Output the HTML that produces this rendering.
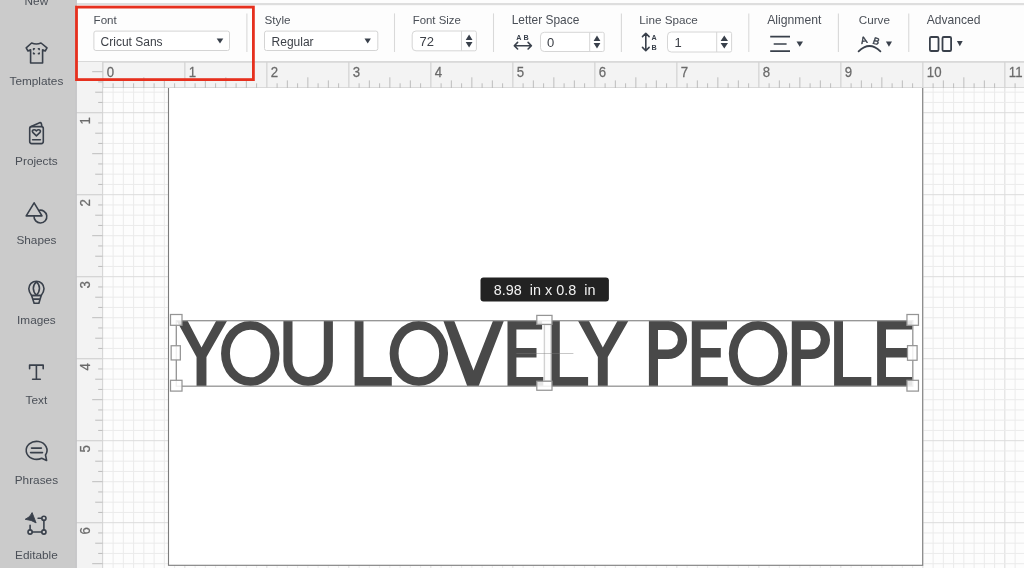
<!DOCTYPE html>
<html><head><meta charset="utf-8"><title>Cricut Design Space</title>
<style>
html,body{margin:0;padding:0;width:1024px;height:568px;overflow:hidden;background:#fff;}
svg{position:absolute;left:0;top:0;display:block;will-change:transform;}
text{font-family:"Liberation Sans",sans-serif;}
.rn{font-size:14.4px;fill:#6a6a6a;stroke:#6a6a6a;stroke-width:0.25px;}
.tl{font-size:11.7px;fill:#4a4f57;}
.tv{font-size:12px;fill:#3d4148;}
.tv2{font-size:13px;fill:#3d4148;}
.sl{font-size:11.8px;fill:#4a4f57;}
.ab{font-size:7.2px;font-weight:bold;fill:#39404b;}
.ab2{font-size:9.6px;fill:#39404b;stroke:#39404b;stroke-width:0.45px;}
</style></head>
<body>
<svg width="1024" height="568" viewBox="0 0 1024 568">
<rect x="103" y="88" width="921" height="480" fill="#fdfdfd"/>
<line x1="113.10" y1="88" x2="113.10" y2="568" stroke="#ebebeb" stroke-width="1"/>
<line x1="123.35" y1="88" x2="123.35" y2="568" stroke="#ebebeb" stroke-width="1"/>
<line x1="133.60" y1="88" x2="133.60" y2="568" stroke="#ebebeb" stroke-width="1"/>
<line x1="143.85" y1="88" x2="143.85" y2="568" stroke="#ebebeb" stroke-width="1"/>
<line x1="154.10" y1="88" x2="154.10" y2="568" stroke="#ebebeb" stroke-width="1"/>
<line x1="164.35" y1="88" x2="164.35" y2="568" stroke="#ebebeb" stroke-width="1"/>
<line x1="174.60" y1="88" x2="174.60" y2="568" stroke="#ebebeb" stroke-width="1"/>
<line x1="184.85" y1="88" x2="184.85" y2="568" stroke="#dcdcdc" stroke-width="1"/>
<line x1="195.10" y1="88" x2="195.10" y2="568" stroke="#ebebeb" stroke-width="1"/>
<line x1="205.35" y1="88" x2="205.35" y2="568" stroke="#ebebeb" stroke-width="1"/>
<line x1="215.60" y1="88" x2="215.60" y2="568" stroke="#ebebeb" stroke-width="1"/>
<line x1="225.85" y1="88" x2="225.85" y2="568" stroke="#ebebeb" stroke-width="1"/>
<line x1="236.10" y1="88" x2="236.10" y2="568" stroke="#ebebeb" stroke-width="1"/>
<line x1="246.35" y1="88" x2="246.35" y2="568" stroke="#ebebeb" stroke-width="1"/>
<line x1="256.60" y1="88" x2="256.60" y2="568" stroke="#ebebeb" stroke-width="1"/>
<line x1="266.85" y1="88" x2="266.85" y2="568" stroke="#dcdcdc" stroke-width="1"/>
<line x1="277.10" y1="88" x2="277.10" y2="568" stroke="#ebebeb" stroke-width="1"/>
<line x1="287.35" y1="88" x2="287.35" y2="568" stroke="#ebebeb" stroke-width="1"/>
<line x1="297.60" y1="88" x2="297.60" y2="568" stroke="#ebebeb" stroke-width="1"/>
<line x1="307.85" y1="88" x2="307.85" y2="568" stroke="#ebebeb" stroke-width="1"/>
<line x1="318.10" y1="88" x2="318.10" y2="568" stroke="#ebebeb" stroke-width="1"/>
<line x1="328.35" y1="88" x2="328.35" y2="568" stroke="#ebebeb" stroke-width="1"/>
<line x1="338.60" y1="88" x2="338.60" y2="568" stroke="#ebebeb" stroke-width="1"/>
<line x1="348.85" y1="88" x2="348.85" y2="568" stroke="#dcdcdc" stroke-width="1"/>
<line x1="359.10" y1="88" x2="359.10" y2="568" stroke="#ebebeb" stroke-width="1"/>
<line x1="369.35" y1="88" x2="369.35" y2="568" stroke="#ebebeb" stroke-width="1"/>
<line x1="379.60" y1="88" x2="379.60" y2="568" stroke="#ebebeb" stroke-width="1"/>
<line x1="389.85" y1="88" x2="389.85" y2="568" stroke="#ebebeb" stroke-width="1"/>
<line x1="400.10" y1="88" x2="400.10" y2="568" stroke="#ebebeb" stroke-width="1"/>
<line x1="410.35" y1="88" x2="410.35" y2="568" stroke="#ebebeb" stroke-width="1"/>
<line x1="420.60" y1="88" x2="420.60" y2="568" stroke="#ebebeb" stroke-width="1"/>
<line x1="430.85" y1="88" x2="430.85" y2="568" stroke="#dcdcdc" stroke-width="1"/>
<line x1="441.10" y1="88" x2="441.10" y2="568" stroke="#ebebeb" stroke-width="1"/>
<line x1="451.35" y1="88" x2="451.35" y2="568" stroke="#ebebeb" stroke-width="1"/>
<line x1="461.60" y1="88" x2="461.60" y2="568" stroke="#ebebeb" stroke-width="1"/>
<line x1="471.85" y1="88" x2="471.85" y2="568" stroke="#ebebeb" stroke-width="1"/>
<line x1="482.10" y1="88" x2="482.10" y2="568" stroke="#ebebeb" stroke-width="1"/>
<line x1="492.35" y1="88" x2="492.35" y2="568" stroke="#ebebeb" stroke-width="1"/>
<line x1="502.60" y1="88" x2="502.60" y2="568" stroke="#ebebeb" stroke-width="1"/>
<line x1="512.85" y1="88" x2="512.85" y2="568" stroke="#dcdcdc" stroke-width="1"/>
<line x1="523.10" y1="88" x2="523.10" y2="568" stroke="#ebebeb" stroke-width="1"/>
<line x1="533.35" y1="88" x2="533.35" y2="568" stroke="#ebebeb" stroke-width="1"/>
<line x1="543.60" y1="88" x2="543.60" y2="568" stroke="#ebebeb" stroke-width="1"/>
<line x1="553.85" y1="88" x2="553.85" y2="568" stroke="#ebebeb" stroke-width="1"/>
<line x1="564.10" y1="88" x2="564.10" y2="568" stroke="#ebebeb" stroke-width="1"/>
<line x1="574.35" y1="88" x2="574.35" y2="568" stroke="#ebebeb" stroke-width="1"/>
<line x1="584.60" y1="88" x2="584.60" y2="568" stroke="#ebebeb" stroke-width="1"/>
<line x1="594.85" y1="88" x2="594.85" y2="568" stroke="#dcdcdc" stroke-width="1"/>
<line x1="605.10" y1="88" x2="605.10" y2="568" stroke="#ebebeb" stroke-width="1"/>
<line x1="615.35" y1="88" x2="615.35" y2="568" stroke="#ebebeb" stroke-width="1"/>
<line x1="625.60" y1="88" x2="625.60" y2="568" stroke="#ebebeb" stroke-width="1"/>
<line x1="635.85" y1="88" x2="635.85" y2="568" stroke="#ebebeb" stroke-width="1"/>
<line x1="646.10" y1="88" x2="646.10" y2="568" stroke="#ebebeb" stroke-width="1"/>
<line x1="656.35" y1="88" x2="656.35" y2="568" stroke="#ebebeb" stroke-width="1"/>
<line x1="666.60" y1="88" x2="666.60" y2="568" stroke="#ebebeb" stroke-width="1"/>
<line x1="676.85" y1="88" x2="676.85" y2="568" stroke="#dcdcdc" stroke-width="1"/>
<line x1="687.10" y1="88" x2="687.10" y2="568" stroke="#ebebeb" stroke-width="1"/>
<line x1="697.35" y1="88" x2="697.35" y2="568" stroke="#ebebeb" stroke-width="1"/>
<line x1="707.60" y1="88" x2="707.60" y2="568" stroke="#ebebeb" stroke-width="1"/>
<line x1="717.85" y1="88" x2="717.85" y2="568" stroke="#ebebeb" stroke-width="1"/>
<line x1="728.10" y1="88" x2="728.10" y2="568" stroke="#ebebeb" stroke-width="1"/>
<line x1="738.35" y1="88" x2="738.35" y2="568" stroke="#ebebeb" stroke-width="1"/>
<line x1="748.60" y1="88" x2="748.60" y2="568" stroke="#ebebeb" stroke-width="1"/>
<line x1="758.85" y1="88" x2="758.85" y2="568" stroke="#dcdcdc" stroke-width="1"/>
<line x1="769.10" y1="88" x2="769.10" y2="568" stroke="#ebebeb" stroke-width="1"/>
<line x1="779.35" y1="88" x2="779.35" y2="568" stroke="#ebebeb" stroke-width="1"/>
<line x1="789.60" y1="88" x2="789.60" y2="568" stroke="#ebebeb" stroke-width="1"/>
<line x1="799.85" y1="88" x2="799.85" y2="568" stroke="#ebebeb" stroke-width="1"/>
<line x1="810.10" y1="88" x2="810.10" y2="568" stroke="#ebebeb" stroke-width="1"/>
<line x1="820.35" y1="88" x2="820.35" y2="568" stroke="#ebebeb" stroke-width="1"/>
<line x1="830.60" y1="88" x2="830.60" y2="568" stroke="#ebebeb" stroke-width="1"/>
<line x1="840.85" y1="88" x2="840.85" y2="568" stroke="#dcdcdc" stroke-width="1"/>
<line x1="851.10" y1="88" x2="851.10" y2="568" stroke="#ebebeb" stroke-width="1"/>
<line x1="861.35" y1="88" x2="861.35" y2="568" stroke="#ebebeb" stroke-width="1"/>
<line x1="871.60" y1="88" x2="871.60" y2="568" stroke="#ebebeb" stroke-width="1"/>
<line x1="881.85" y1="88" x2="881.85" y2="568" stroke="#ebebeb" stroke-width="1"/>
<line x1="892.10" y1="88" x2="892.10" y2="568" stroke="#ebebeb" stroke-width="1"/>
<line x1="902.35" y1="88" x2="902.35" y2="568" stroke="#ebebeb" stroke-width="1"/>
<line x1="912.60" y1="88" x2="912.60" y2="568" stroke="#ebebeb" stroke-width="1"/>
<line x1="922.85" y1="88" x2="922.85" y2="568" stroke="#dcdcdc" stroke-width="1"/>
<line x1="933.10" y1="88" x2="933.10" y2="568" stroke="#ebebeb" stroke-width="1"/>
<line x1="943.35" y1="88" x2="943.35" y2="568" stroke="#ebebeb" stroke-width="1"/>
<line x1="953.60" y1="88" x2="953.60" y2="568" stroke="#ebebeb" stroke-width="1"/>
<line x1="963.85" y1="88" x2="963.85" y2="568" stroke="#ebebeb" stroke-width="1"/>
<line x1="974.10" y1="88" x2="974.10" y2="568" stroke="#ebebeb" stroke-width="1"/>
<line x1="984.35" y1="88" x2="984.35" y2="568" stroke="#ebebeb" stroke-width="1"/>
<line x1="994.60" y1="88" x2="994.60" y2="568" stroke="#ebebeb" stroke-width="1"/>
<line x1="1004.85" y1="88" x2="1004.85" y2="568" stroke="#dcdcdc" stroke-width="1"/>
<line x1="1015.10" y1="88" x2="1015.10" y2="568" stroke="#ebebeb" stroke-width="1"/>
<line x1="103" y1="92.20" x2="1024" y2="92.20" stroke="#ebebeb" stroke-width="1"/>
<line x1="103" y1="102.45" x2="1024" y2="102.45" stroke="#ebebeb" stroke-width="1"/>
<line x1="103" y1="112.70" x2="1024" y2="112.70" stroke="#dcdcdc" stroke-width="1"/>
<line x1="103" y1="122.95" x2="1024" y2="122.95" stroke="#ebebeb" stroke-width="1"/>
<line x1="103" y1="133.20" x2="1024" y2="133.20" stroke="#ebebeb" stroke-width="1"/>
<line x1="103" y1="143.45" x2="1024" y2="143.45" stroke="#ebebeb" stroke-width="1"/>
<line x1="103" y1="153.70" x2="1024" y2="153.70" stroke="#ebebeb" stroke-width="1"/>
<line x1="103" y1="163.95" x2="1024" y2="163.95" stroke="#ebebeb" stroke-width="1"/>
<line x1="103" y1="174.20" x2="1024" y2="174.20" stroke="#ebebeb" stroke-width="1"/>
<line x1="103" y1="184.45" x2="1024" y2="184.45" stroke="#ebebeb" stroke-width="1"/>
<line x1="103" y1="194.70" x2="1024" y2="194.70" stroke="#dcdcdc" stroke-width="1"/>
<line x1="103" y1="204.95" x2="1024" y2="204.95" stroke="#ebebeb" stroke-width="1"/>
<line x1="103" y1="215.20" x2="1024" y2="215.20" stroke="#ebebeb" stroke-width="1"/>
<line x1="103" y1="225.45" x2="1024" y2="225.45" stroke="#ebebeb" stroke-width="1"/>
<line x1="103" y1="235.70" x2="1024" y2="235.70" stroke="#ebebeb" stroke-width="1"/>
<line x1="103" y1="245.95" x2="1024" y2="245.95" stroke="#ebebeb" stroke-width="1"/>
<line x1="103" y1="256.20" x2="1024" y2="256.20" stroke="#ebebeb" stroke-width="1"/>
<line x1="103" y1="266.45" x2="1024" y2="266.45" stroke="#ebebeb" stroke-width="1"/>
<line x1="103" y1="276.70" x2="1024" y2="276.70" stroke="#dcdcdc" stroke-width="1"/>
<line x1="103" y1="286.95" x2="1024" y2="286.95" stroke="#ebebeb" stroke-width="1"/>
<line x1="103" y1="297.20" x2="1024" y2="297.20" stroke="#ebebeb" stroke-width="1"/>
<line x1="103" y1="307.45" x2="1024" y2="307.45" stroke="#ebebeb" stroke-width="1"/>
<line x1="103" y1="317.70" x2="1024" y2="317.70" stroke="#ebebeb" stroke-width="1"/>
<line x1="103" y1="327.95" x2="1024" y2="327.95" stroke="#ebebeb" stroke-width="1"/>
<line x1="103" y1="338.20" x2="1024" y2="338.20" stroke="#ebebeb" stroke-width="1"/>
<line x1="103" y1="348.45" x2="1024" y2="348.45" stroke="#ebebeb" stroke-width="1"/>
<line x1="103" y1="358.70" x2="1024" y2="358.70" stroke="#dcdcdc" stroke-width="1"/>
<line x1="103" y1="368.95" x2="1024" y2="368.95" stroke="#ebebeb" stroke-width="1"/>
<line x1="103" y1="379.20" x2="1024" y2="379.20" stroke="#ebebeb" stroke-width="1"/>
<line x1="103" y1="389.45" x2="1024" y2="389.45" stroke="#ebebeb" stroke-width="1"/>
<line x1="103" y1="399.70" x2="1024" y2="399.70" stroke="#ebebeb" stroke-width="1"/>
<line x1="103" y1="409.95" x2="1024" y2="409.95" stroke="#ebebeb" stroke-width="1"/>
<line x1="103" y1="420.20" x2="1024" y2="420.20" stroke="#ebebeb" stroke-width="1"/>
<line x1="103" y1="430.45" x2="1024" y2="430.45" stroke="#ebebeb" stroke-width="1"/>
<line x1="103" y1="440.70" x2="1024" y2="440.70" stroke="#dcdcdc" stroke-width="1"/>
<line x1="103" y1="450.95" x2="1024" y2="450.95" stroke="#ebebeb" stroke-width="1"/>
<line x1="103" y1="461.20" x2="1024" y2="461.20" stroke="#ebebeb" stroke-width="1"/>
<line x1="103" y1="471.45" x2="1024" y2="471.45" stroke="#ebebeb" stroke-width="1"/>
<line x1="103" y1="481.70" x2="1024" y2="481.70" stroke="#ebebeb" stroke-width="1"/>
<line x1="103" y1="491.95" x2="1024" y2="491.95" stroke="#ebebeb" stroke-width="1"/>
<line x1="103" y1="502.20" x2="1024" y2="502.20" stroke="#ebebeb" stroke-width="1"/>
<line x1="103" y1="512.45" x2="1024" y2="512.45" stroke="#ebebeb" stroke-width="1"/>
<line x1="103" y1="522.70" x2="1024" y2="522.70" stroke="#dcdcdc" stroke-width="1"/>
<line x1="103" y1="532.95" x2="1024" y2="532.95" stroke="#ebebeb" stroke-width="1"/>
<line x1="103" y1="543.20" x2="1024" y2="543.20" stroke="#ebebeb" stroke-width="1"/>
<line x1="103" y1="553.45" x2="1024" y2="553.45" stroke="#ebebeb" stroke-width="1"/>
<line x1="103" y1="563.70" x2="1024" y2="563.70" stroke="#ebebeb" stroke-width="1"/>
<rect x="168.5" y="80" width="754.2" height="485.3" fill="#ffffff" stroke="#7c7c7c" stroke-width="1.1"/>
<rect x="76" y="61" width="948" height="27" fill="#f3f3f3"/>
<rect x="76" y="61" width="948" height="1.8" fill="#d9d9d9"/>
<line x1="103" y1="87.5" x2="1024" y2="87.5" stroke="#d9d9d9" stroke-width="1"/>
<line x1="102.85" y1="62" x2="102.85" y2="88" stroke="#d2d2d2" stroke-width="1.2"/>
<text x="0" y="0" class="rn" transform="translate(106.85,76.7) scale(0.92,1)">0</text>
<line x1="113.10" y1="83.3" x2="113.10" y2="88" stroke="#bdbdbd" stroke-width="1"/>
<line x1="123.35" y1="80.4" x2="123.35" y2="88" stroke="#bdbdbd" stroke-width="1"/>
<line x1="133.60" y1="83.3" x2="133.60" y2="88" stroke="#bdbdbd" stroke-width="1"/>
<line x1="143.85" y1="77.3" x2="143.85" y2="88" stroke="#bdbdbd" stroke-width="1"/>
<line x1="154.10" y1="83.3" x2="154.10" y2="88" stroke="#bdbdbd" stroke-width="1"/>
<line x1="164.35" y1="80.4" x2="164.35" y2="88" stroke="#bdbdbd" stroke-width="1"/>
<line x1="174.60" y1="83.3" x2="174.60" y2="88" stroke="#bdbdbd" stroke-width="1"/>
<line x1="184.85" y1="62" x2="184.85" y2="88" stroke="#d2d2d2" stroke-width="1.2"/>
<text x="0" y="0" class="rn" transform="translate(188.85,76.7) scale(0.92,1)">1</text>
<line x1="195.10" y1="83.3" x2="195.10" y2="88" stroke="#bdbdbd" stroke-width="1"/>
<line x1="205.35" y1="80.4" x2="205.35" y2="88" stroke="#bdbdbd" stroke-width="1"/>
<line x1="215.60" y1="83.3" x2="215.60" y2="88" stroke="#bdbdbd" stroke-width="1"/>
<line x1="225.85" y1="77.3" x2="225.85" y2="88" stroke="#bdbdbd" stroke-width="1"/>
<line x1="236.10" y1="83.3" x2="236.10" y2="88" stroke="#bdbdbd" stroke-width="1"/>
<line x1="246.35" y1="80.4" x2="246.35" y2="88" stroke="#bdbdbd" stroke-width="1"/>
<line x1="256.60" y1="83.3" x2="256.60" y2="88" stroke="#bdbdbd" stroke-width="1"/>
<line x1="266.85" y1="62" x2="266.85" y2="88" stroke="#d2d2d2" stroke-width="1.2"/>
<text x="0" y="0" class="rn" transform="translate(270.85,76.7) scale(0.92,1)">2</text>
<line x1="277.10" y1="83.3" x2="277.10" y2="88" stroke="#bdbdbd" stroke-width="1"/>
<line x1="287.35" y1="80.4" x2="287.35" y2="88" stroke="#bdbdbd" stroke-width="1"/>
<line x1="297.60" y1="83.3" x2="297.60" y2="88" stroke="#bdbdbd" stroke-width="1"/>
<line x1="307.85" y1="77.3" x2="307.85" y2="88" stroke="#bdbdbd" stroke-width="1"/>
<line x1="318.10" y1="83.3" x2="318.10" y2="88" stroke="#bdbdbd" stroke-width="1"/>
<line x1="328.35" y1="80.4" x2="328.35" y2="88" stroke="#bdbdbd" stroke-width="1"/>
<line x1="338.60" y1="83.3" x2="338.60" y2="88" stroke="#bdbdbd" stroke-width="1"/>
<line x1="348.85" y1="62" x2="348.85" y2="88" stroke="#d2d2d2" stroke-width="1.2"/>
<text x="0" y="0" class="rn" transform="translate(352.85,76.7) scale(0.92,1)">3</text>
<line x1="359.10" y1="83.3" x2="359.10" y2="88" stroke="#bdbdbd" stroke-width="1"/>
<line x1="369.35" y1="80.4" x2="369.35" y2="88" stroke="#bdbdbd" stroke-width="1"/>
<line x1="379.60" y1="83.3" x2="379.60" y2="88" stroke="#bdbdbd" stroke-width="1"/>
<line x1="389.85" y1="77.3" x2="389.85" y2="88" stroke="#bdbdbd" stroke-width="1"/>
<line x1="400.10" y1="83.3" x2="400.10" y2="88" stroke="#bdbdbd" stroke-width="1"/>
<line x1="410.35" y1="80.4" x2="410.35" y2="88" stroke="#bdbdbd" stroke-width="1"/>
<line x1="420.60" y1="83.3" x2="420.60" y2="88" stroke="#bdbdbd" stroke-width="1"/>
<line x1="430.85" y1="62" x2="430.85" y2="88" stroke="#d2d2d2" stroke-width="1.2"/>
<text x="0" y="0" class="rn" transform="translate(434.85,76.7) scale(0.92,1)">4</text>
<line x1="441.10" y1="83.3" x2="441.10" y2="88" stroke="#bdbdbd" stroke-width="1"/>
<line x1="451.35" y1="80.4" x2="451.35" y2="88" stroke="#bdbdbd" stroke-width="1"/>
<line x1="461.60" y1="83.3" x2="461.60" y2="88" stroke="#bdbdbd" stroke-width="1"/>
<line x1="471.85" y1="77.3" x2="471.85" y2="88" stroke="#bdbdbd" stroke-width="1"/>
<line x1="482.10" y1="83.3" x2="482.10" y2="88" stroke="#bdbdbd" stroke-width="1"/>
<line x1="492.35" y1="80.4" x2="492.35" y2="88" stroke="#bdbdbd" stroke-width="1"/>
<line x1="502.60" y1="83.3" x2="502.60" y2="88" stroke="#bdbdbd" stroke-width="1"/>
<line x1="512.85" y1="62" x2="512.85" y2="88" stroke="#d2d2d2" stroke-width="1.2"/>
<text x="0" y="0" class="rn" transform="translate(516.85,76.7) scale(0.92,1)">5</text>
<line x1="523.10" y1="83.3" x2="523.10" y2="88" stroke="#bdbdbd" stroke-width="1"/>
<line x1="533.35" y1="80.4" x2="533.35" y2="88" stroke="#bdbdbd" stroke-width="1"/>
<line x1="543.60" y1="83.3" x2="543.60" y2="88" stroke="#bdbdbd" stroke-width="1"/>
<line x1="553.85" y1="77.3" x2="553.85" y2="88" stroke="#bdbdbd" stroke-width="1"/>
<line x1="564.10" y1="83.3" x2="564.10" y2="88" stroke="#bdbdbd" stroke-width="1"/>
<line x1="574.35" y1="80.4" x2="574.35" y2="88" stroke="#bdbdbd" stroke-width="1"/>
<line x1="584.60" y1="83.3" x2="584.60" y2="88" stroke="#bdbdbd" stroke-width="1"/>
<line x1="594.85" y1="62" x2="594.85" y2="88" stroke="#d2d2d2" stroke-width="1.2"/>
<text x="0" y="0" class="rn" transform="translate(598.85,76.7) scale(0.92,1)">6</text>
<line x1="605.10" y1="83.3" x2="605.10" y2="88" stroke="#bdbdbd" stroke-width="1"/>
<line x1="615.35" y1="80.4" x2="615.35" y2="88" stroke="#bdbdbd" stroke-width="1"/>
<line x1="625.60" y1="83.3" x2="625.60" y2="88" stroke="#bdbdbd" stroke-width="1"/>
<line x1="635.85" y1="77.3" x2="635.85" y2="88" stroke="#bdbdbd" stroke-width="1"/>
<line x1="646.10" y1="83.3" x2="646.10" y2="88" stroke="#bdbdbd" stroke-width="1"/>
<line x1="656.35" y1="80.4" x2="656.35" y2="88" stroke="#bdbdbd" stroke-width="1"/>
<line x1="666.60" y1="83.3" x2="666.60" y2="88" stroke="#bdbdbd" stroke-width="1"/>
<line x1="676.85" y1="62" x2="676.85" y2="88" stroke="#d2d2d2" stroke-width="1.2"/>
<text x="0" y="0" class="rn" transform="translate(680.85,76.7) scale(0.92,1)">7</text>
<line x1="687.10" y1="83.3" x2="687.10" y2="88" stroke="#bdbdbd" stroke-width="1"/>
<line x1="697.35" y1="80.4" x2="697.35" y2="88" stroke="#bdbdbd" stroke-width="1"/>
<line x1="707.60" y1="83.3" x2="707.60" y2="88" stroke="#bdbdbd" stroke-width="1"/>
<line x1="717.85" y1="77.3" x2="717.85" y2="88" stroke="#bdbdbd" stroke-width="1"/>
<line x1="728.10" y1="83.3" x2="728.10" y2="88" stroke="#bdbdbd" stroke-width="1"/>
<line x1="738.35" y1="80.4" x2="738.35" y2="88" stroke="#bdbdbd" stroke-width="1"/>
<line x1="748.60" y1="83.3" x2="748.60" y2="88" stroke="#bdbdbd" stroke-width="1"/>
<line x1="758.85" y1="62" x2="758.85" y2="88" stroke="#d2d2d2" stroke-width="1.2"/>
<text x="0" y="0" class="rn" transform="translate(762.85,76.7) scale(0.92,1)">8</text>
<line x1="769.10" y1="83.3" x2="769.10" y2="88" stroke="#bdbdbd" stroke-width="1"/>
<line x1="779.35" y1="80.4" x2="779.35" y2="88" stroke="#bdbdbd" stroke-width="1"/>
<line x1="789.60" y1="83.3" x2="789.60" y2="88" stroke="#bdbdbd" stroke-width="1"/>
<line x1="799.85" y1="77.3" x2="799.85" y2="88" stroke="#bdbdbd" stroke-width="1"/>
<line x1="810.10" y1="83.3" x2="810.10" y2="88" stroke="#bdbdbd" stroke-width="1"/>
<line x1="820.35" y1="80.4" x2="820.35" y2="88" stroke="#bdbdbd" stroke-width="1"/>
<line x1="830.60" y1="83.3" x2="830.60" y2="88" stroke="#bdbdbd" stroke-width="1"/>
<line x1="840.85" y1="62" x2="840.85" y2="88" stroke="#d2d2d2" stroke-width="1.2"/>
<text x="0" y="0" class="rn" transform="translate(844.85,76.7) scale(0.92,1)">9</text>
<line x1="851.10" y1="83.3" x2="851.10" y2="88" stroke="#bdbdbd" stroke-width="1"/>
<line x1="861.35" y1="80.4" x2="861.35" y2="88" stroke="#bdbdbd" stroke-width="1"/>
<line x1="871.60" y1="83.3" x2="871.60" y2="88" stroke="#bdbdbd" stroke-width="1"/>
<line x1="881.85" y1="77.3" x2="881.85" y2="88" stroke="#bdbdbd" stroke-width="1"/>
<line x1="892.10" y1="83.3" x2="892.10" y2="88" stroke="#bdbdbd" stroke-width="1"/>
<line x1="902.35" y1="80.4" x2="902.35" y2="88" stroke="#bdbdbd" stroke-width="1"/>
<line x1="912.60" y1="83.3" x2="912.60" y2="88" stroke="#bdbdbd" stroke-width="1"/>
<line x1="922.85" y1="62" x2="922.85" y2="88" stroke="#d2d2d2" stroke-width="1.2"/>
<text x="0" y="0" class="rn" transform="translate(926.85,76.7) scale(0.92,1)">10</text>
<line x1="933.10" y1="83.3" x2="933.10" y2="88" stroke="#bdbdbd" stroke-width="1"/>
<line x1="943.35" y1="80.4" x2="943.35" y2="88" stroke="#bdbdbd" stroke-width="1"/>
<line x1="953.60" y1="83.3" x2="953.60" y2="88" stroke="#bdbdbd" stroke-width="1"/>
<line x1="963.85" y1="77.3" x2="963.85" y2="88" stroke="#bdbdbd" stroke-width="1"/>
<line x1="974.10" y1="83.3" x2="974.10" y2="88" stroke="#bdbdbd" stroke-width="1"/>
<line x1="984.35" y1="80.4" x2="984.35" y2="88" stroke="#bdbdbd" stroke-width="1"/>
<line x1="994.60" y1="83.3" x2="994.60" y2="88" stroke="#bdbdbd" stroke-width="1"/>
<line x1="1004.85" y1="62" x2="1004.85" y2="88" stroke="#d2d2d2" stroke-width="1.2"/>
<text x="0" y="0" class="rn" transform="translate(1008.85,76.7) scale(0.92,1)">11</text>
<line x1="1015.10" y1="83.3" x2="1015.10" y2="88" stroke="#bdbdbd" stroke-width="1"/>
<rect x="76" y="62" width="26.6" height="506" fill="#f3f3f3"/>
<line x1="102.6" y1="62" x2="102.6" y2="568" stroke="#d6d6d6" stroke-width="1.1"/>
<line x1="92.2" y1="71.70" x2="102.6" y2="71.70" stroke="#bdbdbd" stroke-width="1"/>
<line x1="98.2" y1="81.95" x2="102.6" y2="81.95" stroke="#bdbdbd" stroke-width="1"/>
<line x1="95.2" y1="92.20" x2="102.6" y2="92.20" stroke="#bdbdbd" stroke-width="1"/>
<line x1="98.2" y1="102.45" x2="102.6" y2="102.45" stroke="#bdbdbd" stroke-width="1"/>
<line x1="76" y1="112.70" x2="102.6" y2="112.70" stroke="#d2d2d2" stroke-width="1.2"/>
<text x="0" y="0" class="rn" text-anchor="middle" transform="translate(90.3,120.80) rotate(-90) scale(0.92,1)">1</text>
<line x1="98.2" y1="122.95" x2="102.6" y2="122.95" stroke="#bdbdbd" stroke-width="1"/>
<line x1="95.2" y1="133.20" x2="102.6" y2="133.20" stroke="#bdbdbd" stroke-width="1"/>
<line x1="98.2" y1="143.45" x2="102.6" y2="143.45" stroke="#bdbdbd" stroke-width="1"/>
<line x1="92.2" y1="153.70" x2="102.6" y2="153.70" stroke="#bdbdbd" stroke-width="1"/>
<line x1="98.2" y1="163.95" x2="102.6" y2="163.95" stroke="#bdbdbd" stroke-width="1"/>
<line x1="95.2" y1="174.20" x2="102.6" y2="174.20" stroke="#bdbdbd" stroke-width="1"/>
<line x1="98.2" y1="184.45" x2="102.6" y2="184.45" stroke="#bdbdbd" stroke-width="1"/>
<line x1="76" y1="194.70" x2="102.6" y2="194.70" stroke="#d2d2d2" stroke-width="1.2"/>
<text x="0" y="0" class="rn" text-anchor="middle" transform="translate(90.3,202.80) rotate(-90) scale(0.92,1)">2</text>
<line x1="98.2" y1="204.95" x2="102.6" y2="204.95" stroke="#bdbdbd" stroke-width="1"/>
<line x1="95.2" y1="215.20" x2="102.6" y2="215.20" stroke="#bdbdbd" stroke-width="1"/>
<line x1="98.2" y1="225.45" x2="102.6" y2="225.45" stroke="#bdbdbd" stroke-width="1"/>
<line x1="92.2" y1="235.70" x2="102.6" y2="235.70" stroke="#bdbdbd" stroke-width="1"/>
<line x1="98.2" y1="245.95" x2="102.6" y2="245.95" stroke="#bdbdbd" stroke-width="1"/>
<line x1="95.2" y1="256.20" x2="102.6" y2="256.20" stroke="#bdbdbd" stroke-width="1"/>
<line x1="98.2" y1="266.45" x2="102.6" y2="266.45" stroke="#bdbdbd" stroke-width="1"/>
<line x1="76" y1="276.70" x2="102.6" y2="276.70" stroke="#d2d2d2" stroke-width="1.2"/>
<text x="0" y="0" class="rn" text-anchor="middle" transform="translate(90.3,284.80) rotate(-90) scale(0.92,1)">3</text>
<line x1="98.2" y1="286.95" x2="102.6" y2="286.95" stroke="#bdbdbd" stroke-width="1"/>
<line x1="95.2" y1="297.20" x2="102.6" y2="297.20" stroke="#bdbdbd" stroke-width="1"/>
<line x1="98.2" y1="307.45" x2="102.6" y2="307.45" stroke="#bdbdbd" stroke-width="1"/>
<line x1="92.2" y1="317.70" x2="102.6" y2="317.70" stroke="#bdbdbd" stroke-width="1"/>
<line x1="98.2" y1="327.95" x2="102.6" y2="327.95" stroke="#bdbdbd" stroke-width="1"/>
<line x1="95.2" y1="338.20" x2="102.6" y2="338.20" stroke="#bdbdbd" stroke-width="1"/>
<line x1="98.2" y1="348.45" x2="102.6" y2="348.45" stroke="#bdbdbd" stroke-width="1"/>
<line x1="76" y1="358.70" x2="102.6" y2="358.70" stroke="#d2d2d2" stroke-width="1.2"/>
<text x="0" y="0" class="rn" text-anchor="middle" transform="translate(90.3,366.80) rotate(-90) scale(0.92,1)">4</text>
<line x1="98.2" y1="368.95" x2="102.6" y2="368.95" stroke="#bdbdbd" stroke-width="1"/>
<line x1="95.2" y1="379.20" x2="102.6" y2="379.20" stroke="#bdbdbd" stroke-width="1"/>
<line x1="98.2" y1="389.45" x2="102.6" y2="389.45" stroke="#bdbdbd" stroke-width="1"/>
<line x1="92.2" y1="399.70" x2="102.6" y2="399.70" stroke="#bdbdbd" stroke-width="1"/>
<line x1="98.2" y1="409.95" x2="102.6" y2="409.95" stroke="#bdbdbd" stroke-width="1"/>
<line x1="95.2" y1="420.20" x2="102.6" y2="420.20" stroke="#bdbdbd" stroke-width="1"/>
<line x1="98.2" y1="430.45" x2="102.6" y2="430.45" stroke="#bdbdbd" stroke-width="1"/>
<line x1="76" y1="440.70" x2="102.6" y2="440.70" stroke="#d2d2d2" stroke-width="1.2"/>
<text x="0" y="0" class="rn" text-anchor="middle" transform="translate(90.3,448.80) rotate(-90) scale(0.92,1)">5</text>
<line x1="98.2" y1="450.95" x2="102.6" y2="450.95" stroke="#bdbdbd" stroke-width="1"/>
<line x1="95.2" y1="461.20" x2="102.6" y2="461.20" stroke="#bdbdbd" stroke-width="1"/>
<line x1="98.2" y1="471.45" x2="102.6" y2="471.45" stroke="#bdbdbd" stroke-width="1"/>
<line x1="92.2" y1="481.70" x2="102.6" y2="481.70" stroke="#bdbdbd" stroke-width="1"/>
<line x1="98.2" y1="491.95" x2="102.6" y2="491.95" stroke="#bdbdbd" stroke-width="1"/>
<line x1="95.2" y1="502.20" x2="102.6" y2="502.20" stroke="#bdbdbd" stroke-width="1"/>
<line x1="98.2" y1="512.45" x2="102.6" y2="512.45" stroke="#bdbdbd" stroke-width="1"/>
<line x1="76" y1="522.70" x2="102.6" y2="522.70" stroke="#d2d2d2" stroke-width="1.2"/>
<text x="0" y="0" class="rn" text-anchor="middle" transform="translate(90.3,530.80) rotate(-90) scale(0.92,1)">6</text>
<line x1="98.2" y1="532.95" x2="102.6" y2="532.95" stroke="#bdbdbd" stroke-width="1"/>
<line x1="95.2" y1="543.20" x2="102.6" y2="543.20" stroke="#bdbdbd" stroke-width="1"/>
<line x1="98.2" y1="553.45" x2="102.6" y2="553.45" stroke="#bdbdbd" stroke-width="1"/>
<line x1="92.2" y1="563.70" x2="102.6" y2="563.70" stroke="#bdbdbd" stroke-width="1"/>
<path d="M176.80,321.0 H187.70 L201.50,347.6 L216.10,321.0 H227.00 L206.45,357.00 V386.0 H196.55 V357.00 Z M221.05,353.5 A29.2,32.5 0 1 0 279.45,353.5 A29.2,32.5 0 1 0 221.05,353.5 Z M229.95,353.5 A20.3,23.85 0 1 1 270.55,353.5 A20.3,23.85 0 1 1 229.95,353.5 Z M283.40,321.0 H292.50 V361.25 A15.65,15.65 0 0 0 323.80,361.25 V321.0 H332.90 V361.25 A24.75,24.75 0 0 1 283.40,361.25 Z M354.60,321.0 H363.50 V377.10 H391.80 V386.0 H354.60 Z M389.65,353.5 A29.2,32.5 0 1 0 448.05,353.5 A29.2,32.5 0 1 0 389.65,353.5 Z M398.55,353.5 A20.3,23.85 0 1 1 439.15,353.5 A20.3,23.85 0 1 1 398.55,353.5 Z M443.40,321.0 H454.30 L473.50,370.6 L492.90,321.0 H503.80 L478.70,386.0 H467.20 Z M507.50,321.0 H542.10 V329.60 H516.40 V348.1 H536.50 V357.5 H516.40 V377.00 H543.30 V386.0 H507.50 Z M550.90,321.0 H559.80 V377.10 H588.10 V386.0 H550.90 Z M578.10,321.0 H589.00 L602.80,347.6 L617.40,321.0 H628.30 L607.75,357.00 V386.0 H597.85 V357.00 Z M648.90,321.0 H668.05 A19.05,19.05 0 0 1 668.05,359.1 H658.00 V386.0 H648.90 Z M658.00,329.9 H668.05 A9.85,9.85 0 0 1 668.05,349.6 H658.00 Z M691.80,321.0 H727.00 V329.60 H700.70 V348.1 H720.80 V357.5 H700.70 V377.00 H727.80 V386.0 H691.80 Z M728.85,353.5 A29.2,32.5 0 1 0 787.25,353.5 A29.2,32.5 0 1 0 728.85,353.5 Z M737.75,353.5 A20.3,23.85 0 1 1 778.35,353.5 A20.3,23.85 0 1 1 737.75,353.5 Z M791.80,321.0 H810.95 A19.05,19.05 0 0 1 810.95,359.1 H800.90 V386.0 H791.80 Z M800.90,329.9 H810.95 A9.85,9.85 0 0 1 810.95,349.6 H800.90 Z M834.10,321.0 H843.00 V377.10 H871.30 V386.0 H834.10 Z M877.10,321.0 H912.30 V329.60 H886.00 V348.1 H907.60 V357.5 H886.00 V377.00 H912.30 V386.0 H877.10 Z" fill="#494949" fill-rule="evenodd"/>
<rect x="176.3" y="320.7" width="736.5" height="65.5" fill="none" stroke="#939393" stroke-width="1.3"/>
<rect x="544.4" y="324.5" width="6.5" height="56.5" fill="#fdfdfd" stroke="#d2d2d2" stroke-width="1.4"/>
<line x1="516.4" y1="353.5" x2="573.4" y2="353.5" stroke="#7a7a7a" stroke-opacity="0.42" stroke-width="1"/>
<rect x="170.50" y="314.50" width="11.5" height="10.8" fill="#ffffff" fill-opacity="0.85" stroke="#959595" stroke-width="1.25"/>
<rect x="170.50" y="380.30" width="11.5" height="10.8" fill="#ffffff" fill-opacity="0.85" stroke="#959595" stroke-width="1.25"/>
<rect x="906.95" y="314.50" width="11.5" height="10.8" fill="#ffffff" fill-opacity="0.85" stroke="#959595" stroke-width="1.25"/>
<rect x="906.95" y="380.30" width="11.5" height="10.8" fill="#ffffff" fill-opacity="0.85" stroke="#959595" stroke-width="1.25"/>
<rect x="171.15" y="345.75" width="9.2" height="14.2" fill="#ffffff" fill-opacity="0.85" stroke="#959595" stroke-width="1.25"/>
<rect x="907.50" y="345.65" width="9.6" height="14.6" fill="#ffffff" fill-opacity="0.85" stroke="#959595" stroke-width="1.25"/>
<rect x="536.80" y="315.40" width="15.2" height="9.0" fill="#ffffff" fill-opacity="0.85" stroke="#959595" stroke-width="1.25"/>
<rect x="536.80" y="381.25" width="15.2" height="9.0" fill="#ffffff" fill-opacity="0.85" stroke="#959595" stroke-width="1.25"/>
<rect x="480.5" y="277.6" width="128.4" height="23.9" rx="3" fill="#222222"/>
<text x="544.6" y="294.9" text-anchor="middle" style="font-size:14.4px;fill:#f2f2f2;white-space:pre" xml:space="preserve">8.98  in x 0.8  in</text>
<rect x="76" y="0" width="948" height="61" fill="#fdfdfd"/>
<rect x="76" y="3" width="948" height="2.2" fill="#dedede"/>
<line x1="246.9" y1="13.4" x2="246.9" y2="52" stroke="#d9d9d9" stroke-width="1.1"/>
<line x1="394.5" y1="13.4" x2="394.5" y2="52" stroke="#d9d9d9" stroke-width="1.1"/>
<line x1="493.5" y1="13.4" x2="493.5" y2="52" stroke="#d9d9d9" stroke-width="1.1"/>
<line x1="621.4" y1="13.4" x2="621.4" y2="52" stroke="#d9d9d9" stroke-width="1.1"/>
<line x1="748.8" y1="13.4" x2="748.8" y2="52" stroke="#d9d9d9" stroke-width="1.1"/>
<line x1="838.4" y1="13.4" x2="838.4" y2="52" stroke="#d9d9d9" stroke-width="1.1"/>
<line x1="908.75" y1="13.4" x2="908.75" y2="52" stroke="#d9d9d9" stroke-width="1.1"/>
<text x="93.6" y="23.9" class="tl" style="font-size:11.6px">Font</text>
<text x="264.5" y="23.9" class="tl" style="font-size:11.7px">Style</text>
<text x="412.7" y="23.9" class="tl" style="font-size:11.4px">Font Size</text>
<text x="511.7" y="23.9" class="tl" style="font-size:11.93px">Letter Space</text>
<text x="639.3" y="23.9" class="tl" style="font-size:11.7px">Line Space</text>
<text x="767.2" y="23.9" class="tl" style="font-size:12.2px">Alignment</text>
<text x="858.75" y="23.9" class="tl" style="font-size:11.7px">Curve</text>
<text x="926.7" y="23.9" class="tl" style="font-size:12.1px">Advanced</text>
<rect x="93.9" y="31.1" width="135.6" height="19.4" rx="2" fill="#fff" stroke="#d4d4d4" stroke-width="1"/>
<text x="100.6" y="45.5" class="tv">Cricut Sans</text>
<path d="M216.7,38.6 H223.3 L220,43.6 Z" fill="#39404b"/>
<rect x="264.5" y="31.1" width="113.3" height="19.4" rx="2" fill="#fff" stroke="#d4d4d4" stroke-width="1"/>
<text x="271.6" y="45.5" class="tv">Regular</text>
<path d="M364.5,38.6 H370.9 L367.7,43.6 Z" fill="#39404b"/>
<path d="M416.0,31.0 H474.79999999999995 Q476.4,31.0 476.4,32.6 V49.199999999999996 Q476.4,50.8 474.79999999999995,50.8 H416.0 Q412.2,50.8 412.2,47.0 V34.8 Q412.2,31.0 416.0,31.0 Z" fill="#fff" stroke="#d6d6d6" stroke-width="1"/>
<line x1="461.5" y1="31.0" x2="461.5" y2="50.8" stroke="#d6d6d6" stroke-width="1"/>
<path d="M465.70,39.90 H472.50 L469.10,34.50 Z M465.70,42.00 H472.50 L469.10,47.50 Z" fill="#39404b"/>
<text x="419.5" y="45.6" class="tv2">72</text>
<path d="M544.3,32.3 H602.6 Q604.2,32.3 604.2,33.9 V49.9 Q604.2,51.5 602.6,51.5 H544.3 Q540.5,51.5 540.5,47.7 V36.099999999999994 Q540.5,32.3 544.3,32.3 Z" fill="#fff" stroke="#d6d6d6" stroke-width="1"/>
<line x1="589.7" y1="32.3" x2="589.7" y2="51.5" stroke="#d6d6d6" stroke-width="1"/>
<path d="M593.60,40.90 H600.40 L597.00,35.50 Z M593.60,43.00 H600.40 L597.00,48.50 Z" fill="#39404b"/>
<text x="546.9" y="46.9" class="tv2">0</text>
<path d="M671.3,32.0 H730.0 Q731.6,32.0 731.6,33.6 V50.4 Q731.6,52.0 730.0,52.0 H671.3 Q667.5,52.0 667.5,48.2 V35.8 Q667.5,32.0 671.3,32.0 Z" fill="#fff" stroke="#d6d6d6" stroke-width="1"/>
<line x1="716.7" y1="32.0" x2="716.7" y2="52.0" stroke="#d6d6d6" stroke-width="1"/>
<path d="M720.60,41.00 H728.00 L724.30,35.60 Z M720.60,43.10 H728.00 L724.30,48.60 Z" fill="#39404b"/>
<text x="674.5" y="46.7" class="tv2">1</text>
<text x="516.2" y="39.9" class="ab">A</text><text x="523.4" y="39.9" class="ab">B</text>
<path d="M514.5,45.7 H531.2 M517.6,42.4 L514.3,45.7 L517.6,49 M528.1,42.4 L531.4,45.7 L528.1,49" fill="none" stroke="#39404b" stroke-width="1.6" stroke-linecap="round" stroke-linejoin="round"/>
<path d="M645.8,33.4 V50.6 M642.5,36.6 L645.8,33.3 L649.1,36.6 M642.5,47.4 L645.8,50.7 L649.1,47.4" fill="none" stroke="#39404b" stroke-width="1.6" stroke-linecap="round" stroke-linejoin="round"/>
<text x="651.5" y="40.2" class="ab">A</text><text x="651.5" y="49.6" class="ab">B</text>
<path d="M770.2,36.7 H790 M773.7,44 H786.6 M770.2,51.1 H790" stroke="#39404b" stroke-width="1.7"/>
<path d="M796.5,41.4 H803 L799.75,46.7 Z" fill="#39404b"/>
<path d="M858.6,51.4 Q869.5,40.6 880.4,51.4" fill="none" stroke="#39404b" stroke-width="1.8" stroke-linecap="round"/>
<text x="0" y="0" class="ab2" transform="translate(861.6,43.9) rotate(-13)">A</text>
<text x="0" y="0" class="ab2" transform="translate(871.9,43.4) rotate(14) skewX(-6)">B</text>
<path d="M885.9,41.4 H892 L888.95,46.8 Z" fill="#39404b"/>
<rect x="929.9" y="37" width="8.6" height="14" rx="1.3" fill="none" stroke="#39404b" stroke-width="1.8"/>
<rect x="942.5" y="37" width="8.6" height="14" rx="1.3" fill="none" stroke="#39404b" stroke-width="1.8"/>
<path d="M956.9,41.1 H962.7 L959.8,46.3 Z" fill="#39404b"/>
<rect x="0" y="0" width="76.4" height="568" fill="#cbcbcb"/>
<rect x="75.6" y="0" width="1.2" height="568" fill="#c2c3c5"/>
<text x="36.4" y="5.2" class="sl" text-anchor="middle">New</text>
<text x="36.4" y="85.4" class="sl" text-anchor="middle">Templates</text>
<text x="36.4" y="165.0" class="sl" text-anchor="middle">Projects</text>
<text x="36.4" y="244.1" class="sl" text-anchor="middle">Shapes</text>
<text x="36.4" y="324.2" class="sl" text-anchor="middle">Images</text>
<text x="36.4" y="403.7" class="sl" text-anchor="middle">Text</text>
<text x="36.4" y="483.8" class="sl" text-anchor="middle">Phrases</text>
<text x="36.4" y="559.2" class="sl" text-anchor="middle">Editable</text>
<path d="M31.6,43 Q36.3,45 41,43 L47,47.8 L45.2,51 L42.6,49.8 V63 H30.6 V49.8 L28,51 L26.2,47.8 Z" fill="none" stroke="#39404b" stroke-width="1.6" stroke-linecap="round" stroke-linejoin="round"/>
<path d="M33.6,49.6 v-0.8 h0.8 M38.4,48.8 h0.8 v0.8 M33.6,53 v0.8 h0.8 M39.2,53 v0.8 h-0.8" fill="none" stroke="#39404b" stroke-width="1.6" stroke-linecap="round" stroke-linejoin="round"/>
<rect x="29.7" y="126.6" width="13.6" height="17" rx="2" fill="none" stroke="#39404b" stroke-width="1.6" stroke-linecap="round" stroke-linejoin="round"/>
<path d="M30.5,126.8 L40.2,122.6 Q41.6,122.6 41.8,126.3" fill="none" stroke="#39404b" stroke-width="1.6" stroke-linecap="round" stroke-linejoin="round"/>
<path d="M36.4,135.8 L32.8,132.4 Q31.8,130.8 33.2,129.9 Q34.8,129.2 36.4,130.9 Q38,129.2 39.6,129.9 Q41,130.8 40,132.4 Z" fill="none" stroke="#39404b" stroke-width="1.6" stroke-linecap="round" stroke-linejoin="round"/>
<path d="M32.6,139.7 H40.4" fill="none" stroke="#39404b" stroke-width="1.6" stroke-linecap="round" stroke-linejoin="round"/>
<path d="M34.1,202.8 L42,215.9 H26.2 Z" fill="none" stroke="#39404b" stroke-width="1.6" stroke-linecap="round" stroke-linejoin="round"/>
<path d="M38.7,210.4 A6.4,6.4 0 1 1 34.04,215.9" fill="none" stroke="#39404b" stroke-width="1.6" stroke-linecap="round" stroke-linejoin="round"/>
<path d="M31.6,295.5 C29.2,292.2 28.8,290 28.8,288.8 A7.6,7.6 0 0 1 44,288.8 C44,290 43.6,292.2 41.2,295.5 Z" fill="none" stroke="#39404b" stroke-width="1.6" stroke-linecap="round" stroke-linejoin="round"/>
<path d="M36.4,281.8 C32.3,285.2 32.3,291.2 36.4,295.2 C40.5,291.2 40.5,285.2 36.4,281.8 Z" fill="none" stroke="#39404b" stroke-width="1.6" stroke-linecap="round" stroke-linejoin="round"/>
<path d="M31.6,295.5 H41.2 L38.9,303.3 H34.1 Z M33,299.1 H39.8" fill="none" stroke="#39404b" stroke-width="1.6" stroke-linecap="round" stroke-linejoin="round"/>
<path d="M29.6,368.8 V365.1 H43.2 V368.8 M36.4,365.1 V379.3 M32.6,379.3 H40.3" fill="none" stroke="#39404b" stroke-width="1.6" stroke-linecap="round" stroke-linejoin="round"/>
<path d="M41.7,458.2 A10.4,9.0 0 1 1 45.5,455 L46.6,460.4 Z" fill="none" stroke="#39404b" stroke-width="1.6" stroke-linecap="round" stroke-linejoin="round"/>
<path d="M31.5,448.1 H41.4 M30.6,452.6 H42.5" fill="none" stroke="#39404b" stroke-width="1.6" stroke-linecap="round" stroke-linejoin="round"/>
<path d="M32.1,512.6 L36.1,522.9 Q31.5,519.8 25.2,519.3 Q30.2,517.4 32.1,512.6 Z" fill="#39404b" stroke="#39404b" stroke-width="0.9" stroke-linejoin="round"/>
<circle cx="43.9" cy="518.3" r="2.1" fill="none" stroke="#39404b" stroke-width="1.6" stroke-linecap="round" stroke-linejoin="round"/>
<circle cx="43.9" cy="532" r="2.1" fill="none" stroke="#39404b" stroke-width="1.6" stroke-linecap="round" stroke-linejoin="round"/>
<circle cx="30.1" cy="532" r="2.1" fill="none" stroke="#39404b" stroke-width="1.6" stroke-linecap="round" stroke-linejoin="round"/>
<path d="M38.1,518.3 H41.8 M43.9,520.4 V529.9 M32.2,532 H41.8 M30.1,525.2 V529.9" fill="none" stroke="#39404b" stroke-width="1.6" stroke-linecap="round" stroke-linejoin="round"/>
<rect x="76.5" y="7.1" width="176.9" height="72.5" fill="none" stroke="#e6301e" stroke-width="2.8"/>
</svg>
</body></html>
